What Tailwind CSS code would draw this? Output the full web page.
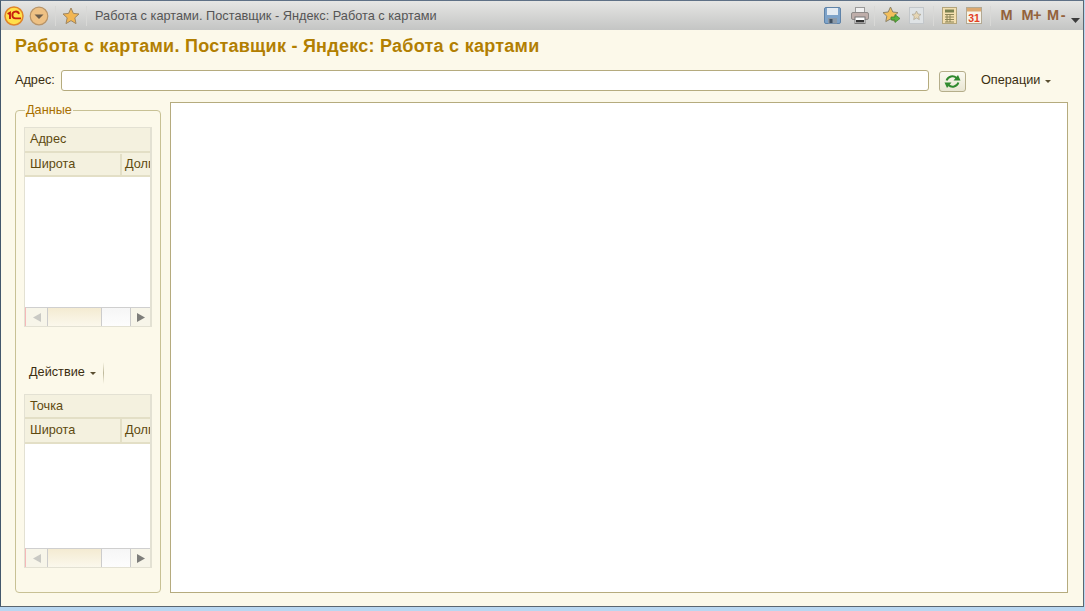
<!DOCTYPE html>
<html lang="ru">
<head>
    <meta charset="UTF-8">
    <title>Работа с картами</title>
    <script src="https://cdn.jsdelivr.net/npm/@tailwindcss/browser@4"></script>
</head>
<body class="w-[1085px] h-[611px] overflow-hidden bg-[#b9d7f1] font-['Liberation_Sans',sans-serif]">
<div class="flex flex-col w-[1084px] h-[607px] border-l border-r border-b border-t border-l-[#44586c] border-r-[#5b6670] border-b-[#5b6670] border-t-[#5f7186] bg-[#fcf9ea]">

    <!-- Верхняя панель -->
    <div class="flex items-center h-[29px] shrink-0 bg-gradient-to-b from-[#e6e6e4] to-[#c4c5c4]">
        <svg class="ml-[3px] w-[20px] h-[20px]" viewBox="0 0 20 20">
            <circle cx="10" cy="10" r="9" fill="#ffe04a" stroke="#e0852a" stroke-width="1.5"/>
            <path d="M3.6 8 L6 6.6 V13 M15 8 A3.4 3.4 0 1 0 11.5 12.4 H17" fill="none" stroke="#c8200f" stroke-width="1.9"/>
        </svg>
        <svg class="ml-[5px] w-[20px] h-[20px]" viewBox="0 0 20 20">
            <circle cx="10" cy="10" r="8.8" fill="#eec184" stroke="#b89468" stroke-width="1.2"/>
            <path d="M5.5 8.5 H14.5 L10 13 Z" fill="#6b5d4b"/>
        </svg>
        <div class="ml-[6px] w-px h-[20px] bg-[#d8d8d6]"></div>
        <svg class="ml-[6px] w-[18px] h-[18px]" viewBox="0 0 18 18">
            <path d="M9 1 L11.4 6.4 L17 7 L12.8 10.8 L14 16.6 L9 13.6 L4 16.6 L5.2 10.8 L1 7 L6.6 6.4 Z" fill="#f2b652" stroke="#a08660" stroke-width="1"/>
        </svg>
        <div class="ml-[6px] w-px h-[20px] bg-[#d8d8d6]"></div>
        <span class="ml-[8px] text-[12.75px] text-[#555555] whitespace-nowrap">Работа с картами. Поставщик - Яндекс: Работа с картами</span>

        <div class="ml-auto flex items-center">
            <svg class="w-[17px] h-[17px]" viewBox="0 0 17 17">
                <rect x="0.5" y="0.5" width="16" height="16" rx="1.5" fill="#7ea3c9" stroke="#5f83a8"/>
                <rect x="3" y="1" width="11" height="7" fill="#e4ebf2"/>
                <rect x="4" y="11" width="9" height="5.5" fill="#8d9aa8"/>
                <rect x="5.5" y="12" width="3" height="4" fill="#3f4f60"/>
            </svg>
            <svg class="ml-[10px] w-[18px] h-[17px]" viewBox="0 0 18 17">
                <rect x="4.5" y="0.5" width="9" height="6" fill="#f1f1f1" stroke="#9a9a9a"/>
                <rect x="0.5" y="5.5" width="17" height="7" rx="1.5" fill="#bfaeaa" stroke="#8e8a88"/>
                <rect x="4" y="10" width="10" height="6.5" fill="#fff" stroke="#777777"/>
                <rect x="5" y="13" width="8" height="2.5" fill="#333"/>
            </svg>
            <div class="ml-[5px] w-px h-[20px] bg-[#d8d8d6]"></div>
            <svg class="ml-[7px] w-[19px] h-[19px]" viewBox="0 0 19 19">
                <path d="M8.5 1 L10.8 6 L16 6.6 L12.2 10.2 L13.2 15.6 L8.5 13 L3.8 15.6 L4.8 10.2 L1 6.6 L6.2 6 Z" fill="#f2bf5c" stroke="#8d8367" stroke-width="1"/>
                <path d="M9 11 H13 V8.5 L18 12.5 L13 16.5 V14 H9 Z" fill="#58b23e" stroke="#3b7f2b" stroke-width="0.7"/>
            </svg>
            <svg class="ml-[8px] w-[15px] h-[17px]" viewBox="0 0 15 17">
                <rect x="0.5" y="0.5" width="14" height="16" fill="#dfe3e5" stroke="#c3c7ca"/>
                <path d="M7.5 4 L8.9 7 L12 7.4 L9.7 9.5 L10.3 12.6 L7.5 11 L4.7 12.6 L5.3 9.5 L3 7.4 L6.1 7 Z" fill="#e6d6b4" stroke="#aaa28f" stroke-width="0.7"/>
            </svg>
            <div class="ml-[9px] w-px h-[20px] bg-[#d8d8d6]"></div>
            <svg class="ml-[8px] w-[15px] h-[17px]" viewBox="0 0 15 17">
                <rect x="0.5" y="0.5" width="14" height="16" fill="#f3dfb0" stroke="#b3a57c"/>
                <rect x="3" y="2.5" width="9" height="3" fill="#7a8150"/>
                <path d="M3 7.5 H12 M3 10 H12 M3 12.5 H12 M3 15 H12 M5 7 V15 M8 7 V15" stroke="#8a8456" stroke-width="1"/>
            </svg>
            <svg class="ml-[9px] w-[16px] h-[17px]" viewBox="0 0 16 17">
                <rect x="0.5" y="0.5" width="15" height="16" fill="#f7f4ea" stroke="#b3a993"/>
                <rect x="1" y="1" width="14" height="3.5" fill="#dca86e"/>
                <text x="8" y="14.5" text-anchor="middle" font-size="10.5" font-weight="700" fill="#e2401f" font-family="Liberation Sans">31</text>
            </svg>
            <div class="ml-[8px] w-px h-[20px] bg-[#d8d8d6]"></div>
            <span class="ml-[9px] text-[14.5px] font-bold text-[#93623c]">M</span>
            <span class="ml-[9px] text-[14.5px] font-bold text-[#93623c] tracking-[-0.5px]">M+</span>
            <span class="ml-[6px] text-[14.5px] font-bold text-[#93623c] tracking-[1.5px]">M-</span>
            <svg class="ml-[4px] mr-[3px] mt-[9px] w-[9px] h-[5px]" viewBox="0 0 9 5"><path d="M0 0 H9 L4.5 5 Z" fill="#3c3c3c"/></svg>
        </div>
    </div>

    <!-- Содержимое формы -->
    <div class="flex flex-col flex-1 min-h-0 pl-[14px] pr-[15px] pb-[13px]">
        <h1 class="mt-[6px] h-[20px] leading-[20px] text-[18px] font-bold tracking-[0.26px] text-[#b27f02] whitespace-nowrap">Работа с картами. Поставщик - Яндекс: Работа с картами</h1>

        <div class="flex items-center mt-[14px] h-[22px]">
            <span class="w-[46px] mb-[1px] text-[12.7px] text-[#3b2e10]">Адрес:</span>
            <div class="w-[868px] h-[21px] mb-[1px] bg-white border border-[#b5ab7e] rounded-[3px]"></div>
            <button class="ml-[10px] mt-[1px] flex items-center justify-center w-[27px] h-[21px] rounded-[3px] border border-[#b5ae8b] bg-gradient-to-b from-[#fbfaf1] to-[#e9e6d3]">
                <svg class="w-[17px] h-[15px]" viewBox="0 0 17 15">
                    <path d="M2.6 6.5 A6 6 0 0 1 12.5 4" fill="none" stroke="#2f8a2f" stroke-width="2"/>
                    <path d="M9.5 6.5 H16.5 L14 1 Z" fill="#2f8a2f"/>
                    <path d="M14.4 8.5 A6 6 0 0 1 4.5 11" fill="none" stroke="#2f8a2f" stroke-width="2"/>
                    <path d="M7.5 8.5 H0.5 L3 14 Z" fill="#2f8a2f"/>
                </svg>
            </button>
            <span class="ml-[15px] mb-[1px] text-[12.7px] text-[#3b2e10]">Операции</span>
            <svg class="ml-[5px] w-[6px] h-[3px]" viewBox="0 0 6 3"><path d="M0 0 H6 L3 3 Z" fill="#5a4f30"/></svg>
        </div>

        <div class="flex flex-1 min-h-0 mt-[10px]">
            <!-- Группа Данные -->
            <fieldset class="w-[146px] mt-[1px] h-[490px] shrink-0 border border-[#c8c195] rounded-[4px] pl-[8px] pt-[9px]">
                <legend class="ml-[1px] px-[1px] h-[15px] leading-[15px] text-[12.7px] text-[#a86f00]">Данные</legend>
                <div class="flex flex-col w-[128px] h-[200px] border border-[#e3e1d3] border-r-2 bg-white">
                    <div class="h-[25px] shrink-0 flex items-center pl-[5px] text-[12.7px] text-[#5e4a10] bg-[#f4f1df] border-b-2 border-[#e3dfc6]">Адрес</div>
                    <div class="flex h-[24px] shrink-0 pt-[1px] text-[12.7px] text-[#5e4a10] bg-[#f4f1df] border-b-2 border-[#e3dfc6] overflow-hidden">
                        <div class="w-[97px] shrink-0 pl-[5px] flex items-center border-r-2 border-[#e3dfc6]">Широта</div>
                        <div class="pl-[3px] flex items-center whitespace-nowrap">Долгота</div>
                    </div>
                    <div class="flex-1"></div>
                    <div class="flex h-[19px] shrink-0 border-t border-[#cfcfcf] border-l border-l-[#f5b8b8]">
                        <div class="w-[22px] flex items-center justify-center border-r border-[#cccccc] bg-[#f7f5e9]">
                            <svg class="w-[8px] h-[9px]" viewBox="0 0 8 9"><path d="M8 0 V9 L0 4.5 Z" fill="#c9c9c4"/></svg>
                        </div>
                        <div class="w-[54px] border-r border-[#cccccc] bg-gradient-to-b from-[#f4ebd2] to-[#fbf8ec]"></div>
                        <div class="w-[29px] border-r border-[#cccccc] bg-gradient-to-b from-[#f6f6f6] to-[#fdfdfd]"></div>
                        <div class="flex-1 flex items-center justify-center bg-[#f7f5e9]">
                            <svg class="w-[8px] h-[9px]" viewBox="0 0 8 9"><path d="M0 0 V9 L8 4.5 Z" fill="#7d7d7a"/></svg>
                        </div>
                    </div>
                </div>

                <div class="flex items-center h-[24px] mt-[34px] pl-[5px]">
                    <span class="text-[12.7px] text-[#3b2e10]">Действие</span>
                    <svg class="ml-[5px] w-[6px] h-[3px]" viewBox="0 0 6 3"><path d="M0 0 H6 L3 3 Z" fill="#5a4f30"/></svg>
                    <div class="ml-[7px] w-px h-[22px] bg-gradient-to-b from-transparent via-[#bdb89a] to-transparent"></div>
                </div>

                <div class="flex flex-col w-[128px] h-[174px] mt-[9px] border border-[#e3e1d3] border-r-2 bg-white">
                    <div class="h-[24px] shrink-0 flex items-center pl-[5px] pt-[1px] text-[12.7px] text-[#5e4a10] bg-[#f4f1df] border-b-2 border-[#e3dfc6]">Точка</div>
                    <div class="flex h-[25px] shrink-0 text-[12.7px] text-[#5e4a10] bg-[#f4f1df] border-b-2 border-[#e3dfc6] overflow-hidden">
                        <div class="w-[97px] shrink-0 pl-[5px] flex items-center border-r-2 border-[#e3dfc6]">Широта</div>
                        <div class="pl-[3px] flex items-center whitespace-nowrap">Долгота</div>
                    </div>
                    <div class="flex-1"></div>
                    <div class="flex h-[19px] shrink-0 border-t border-[#cfcfcf] border-l border-l-[#f5b8b8]">
                        <div class="w-[22px] flex items-center justify-center border-r border-[#cccccc] bg-[#f7f5e9]">
                            <svg class="w-[8px] h-[9px]" viewBox="0 0 8 9"><path d="M8 0 V9 L0 4.5 Z" fill="#c9c9c4"/></svg>
                        </div>
                        <div class="w-[54px] border-r border-[#cccccc] bg-gradient-to-b from-[#f4ebd2] to-[#fbf8ec]"></div>
                        <div class="w-[29px] border-r border-[#cccccc] bg-gradient-to-b from-[#f6f6f6] to-[#fdfdfd]"></div>
                        <div class="flex-1 flex items-center justify-center bg-[#f7f5e9]">
                            <svg class="w-[8px] h-[9px]" viewBox="0 0 8 9"><path d="M0 0 V9 L8 4.5 Z" fill="#7d7d7a"/></svg>
                        </div>
                    </div>
                </div>
            </fieldset>

            <!-- Поле карты -->
            <div class="ml-[9px] w-[898px] h-[491px] bg-white border border-[#b5ab7e]"></div>
        </div>
    </div>
</div>
</body>
</html>
